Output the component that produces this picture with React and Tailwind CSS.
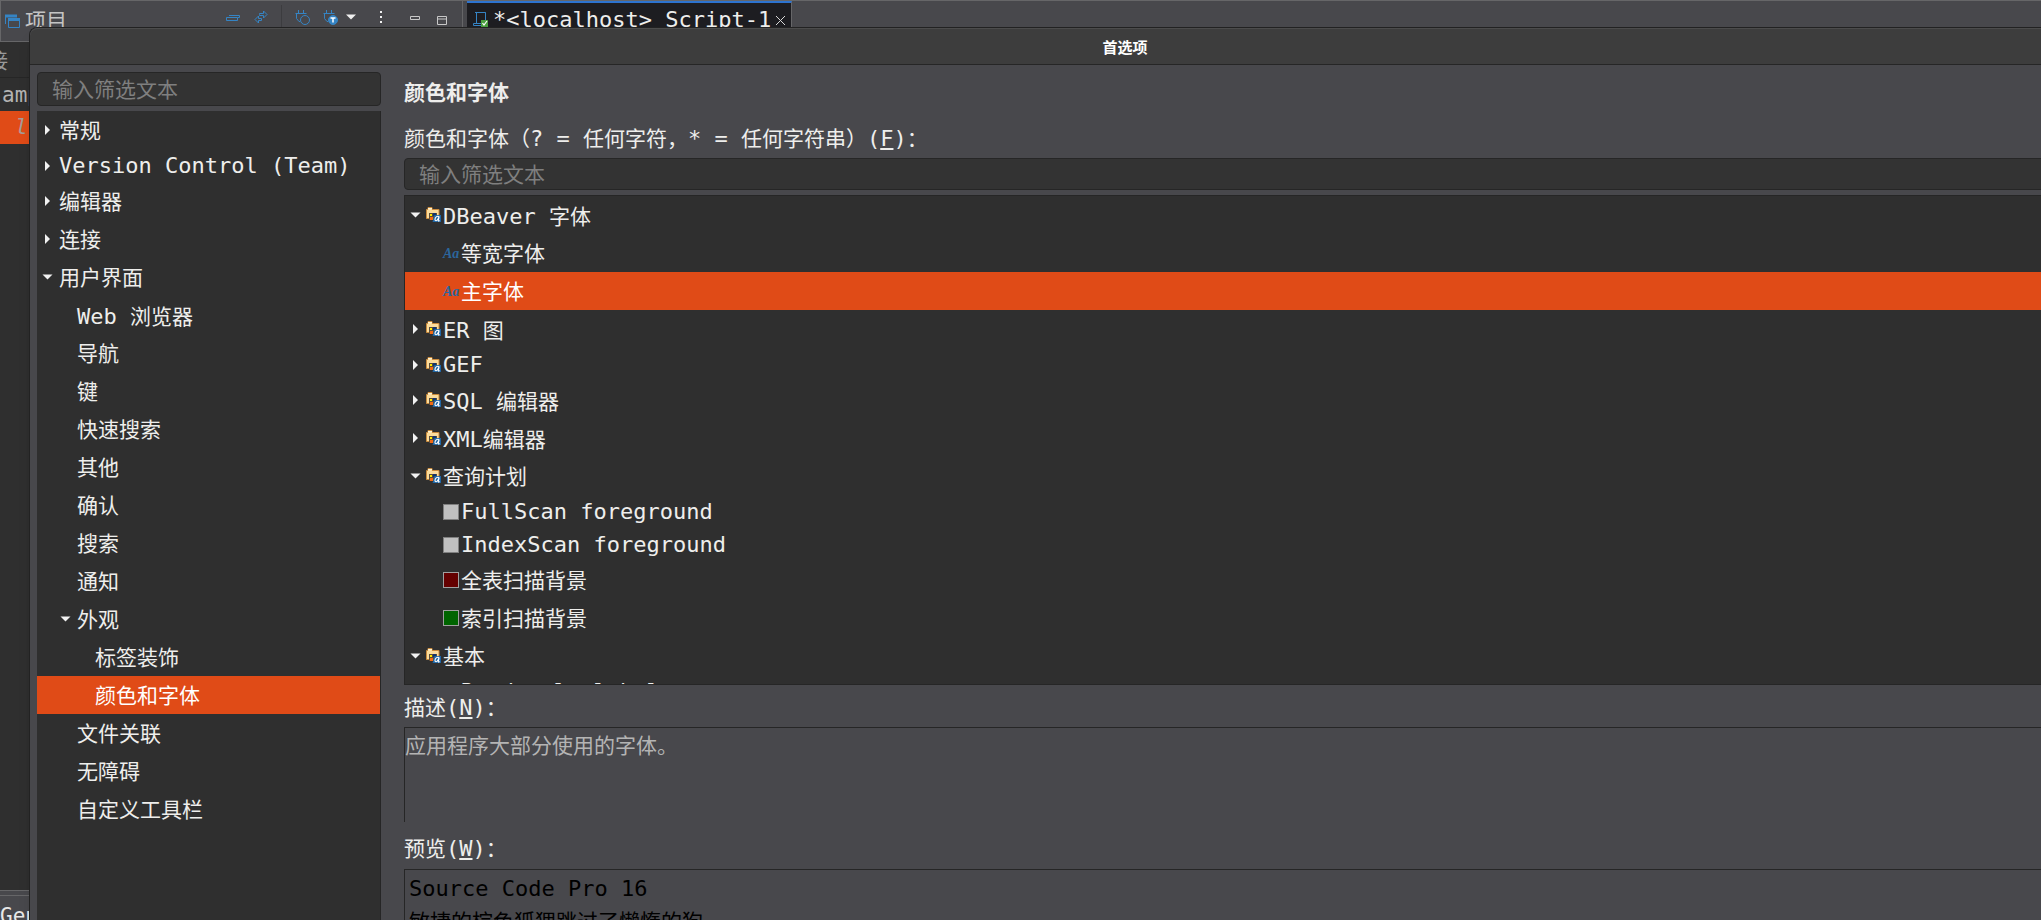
import { useState } from 'react';

// Preferences tree (left side of the dialog)
const PAGES = [
    { label: '常规', level: 0, arrow: 'closed' },
    { label: 'Version Control (Team)', level: 0, arrow: 'closed', short: true },
    { label: '编辑器', level: 0, arrow: 'closed' },
    { label: '连接', level: 0, arrow: 'closed' },
    { label: '用户界面', level: 0, arrow: 'open' },
    { label: 'Web 浏览器', level: 1 },
    { label: '导航', level: 1 },
    { label: '键', level: 1 },
    { label: '快速搜索', level: 1 },
    { label: '其他', level: 1 },
    { label: '确认', level: 1 },
    { label: '搜索', level: 1 },
    { label: '通知', level: 1 },
    { label: '外观', level: 1, arrow: 'open' },
    { label: '标签装饰', level: 2 },
    { label: '颜色和字体', level: 2 },
    { label: '文件关联', level: 1 },
    { label: '无障碍', level: 1 },
    { label: '自定义工具栏', level: 1 },
];

// Colors and fonts tree (right side)
const THEME = [
    { label: 'DBeaver 字体', arrow: 'open' },
    { label: '等宽字体', icon: 'font' },
    { label: '主字体', icon: 'font' },
    { label: 'ER 图', arrow: 'closed' },
    { label: 'GEF', arrow: 'closed', short: true },
    { label: 'SQL 编辑器', arrow: 'closed' },
    { label: 'XML编辑器', arrow: 'closed' },
    { label: '查询计划', arrow: 'open' },
    { label: 'FullScan foreground', icon: 'gray', short: true },
    { label: 'IndexScan foreground', icon: 'gray', short: true },
    { label: '全表扫描背景', icon: 'red' },
    { label: '索引扫描背景', icon: 'green' },
    { label: '基本', arrow: 'open' },
    { label: 'Read-only label', icon: 'gray', short: true },
];

const SWATCHES = {
    gray: 'bg-[#c0c0c0] border-[#808080]',
    red: 'bg-[#640000] border-[#a0a0a0]',
    green: 'bg-[#006400] border-[#a0a0a0]',
};

const INDENTS = ['pl-1', 'pl-[22px]', 'pl-10'];

// Latin runs are set one pixel larger than the Chinese around them
function Text({ children }) {
    return children
        .split(/([\x20-\x7e]+)/)
        .filter(Boolean)
        .map((run, i) => (/^[\x20-\x7e]/.test(run) ? <span key={i} className="whitespace-pre text-[22px]">{run}</span> : run));
}

function Arrow({ state }) {
    return (
        <svg className="w-[13px] h-3 shrink-0" viewBox="0 0 13 12" fill="#f2f2f2" aria-hidden="true">
            {state === 'open' && <path d="M1.500 3.500h10L6.500 8.500z" />}
            {state === 'closed' && <path d="M4 1v10l5-5z" />}
        </svg>
    );
}

function CategoryIcon() {
    return (
        <svg className="w-4 h-4" viewBox="0 0 16 16" aria-hidden="true">
            <path d="M.5 11.500V2.500H2V.5h4v2h7v9z" fill="#fbdc9c" stroke="#c98a3c" />
            <path d="M2 1h4v1.500H2z" fill="#fff2d0" />
            <path d="M3 6h8v7H3z" fill="#5a4c3a" />
            <rect x="4" y="7" width="2" height="2" fill="#ffee00" />
            <rect x="7" y="6" width="3" height="3" fill="#12356e" />
            <rect x="4" y="10" width="3" height="3" fill="#f26a14" />
            <path d="M8.500 8H15v7H6.500z" fill="#1f66a5" />
            <path d="M13 9.500c-2-1-4 1-4 3 0 1.800 2 1.500 3-.5l1.200-2.500-.9 4c0 1 .8.8 1.500 0" fill="none" stroke="#fff" strokeWidth="1.100" />
        </svg>
    );
}

function FontIcon() {
    return (
        <svg className="w-4 h-4 overflow-visible" viewBox="0 0 16 16" aria-hidden="true">
            <text x="0" y="13" fontFamily="Liberation Serif" fontStyle="italic" fontWeight="bold" fontSize="14" fill="#2b669c">Aa</text>
        </svg>
    );
}

function ThemeIcon({ icon }) {
    if (!icon) return <CategoryIcon />;
    if (icon === 'font') return <FontIcon />;
    return <span className={`block w-4 h-4 border ${SWATCHES[icon]}`} />;
}

function Row({ item, selected, onSelect, className, children }) {
    return (
        <li role="treeitem" aria-selected={selected}>
            <button
                type="button"
                onClick={onSelect}
                className={`flex w-full items-center whitespace-nowrap text-left ${item.short ? 'h-[33px]' : 'h-[38px]'} ${selected ? 'bg-[#e04b17] text-white' : ''} ${className}`}
            >
                {children}
                <span className={item.short ? '' : 'pt-1'}>
                    <Text>{item.label}</Text>
                </span>
            </button>
        </li>
    );
}

// Main window toolbar, seen above the dialog
function Workbench() {
    return (
        <div className="flex h-full flex-col bg-[#2f2f2f]">
            <header className="flex h-[42px] shrink-0 border-t border-[#666668] bg-[#48484c]">
                <div className="flex h-full w-[463px] shrink-0 items-start border-x border-b border-[#666668] pl-1">
                    <svg className="mt-3 h-4 w-4 shrink-0" viewBox="0 0 16 16" fill="none" stroke="#3584c4" aria-hidden="true">
                        <path d="M.5 11V2.500h11" />
                        <path d="M0 3h12M3 6.500h12" strokeWidth="3" />
                        <path d="M3.500 5.500h11v9h-11z" />
                    </svg>
                    <span className="ml-1 leading-10 text-[#c4c4c4]">项目</span>
                    <div className="ml-auto flex h-8 items-center pr-3 text-[#3584c4]">
                        <svg className="h-4 w-4" viewBox="0 0 16 16" fill="none" stroke="currentColor" aria-hidden="true">
                            <path d="M4 6.500h10.500v2H13M1.500 8.500h11v3h-11z" />
                        </svg>
                        <svg className="ml-3 h-4 w-4" viewBox="0 0 16 16" fill="none" stroke="currentColor" aria-hidden="true">
                            <path d="M6.500 5.500V4.500h4V2l3.500 3.500L10.500 9V6.500h-4zM8.500 11.500h-3V14L2 10.500 5.500 7v2.500h3z" />
                        </svg>
                        <span className="ml-3 h-6 w-px bg-[#3c3c3f]" />
                        <svg className="ml-3 h-4 w-4" viewBox="0 0 16 16" fill="none" stroke="currentColor" aria-hidden="true">
                            <path d="M4.500 1v3M9.500 1v3M1.500 4.500h11M2.500 4.500v5l2.500 3h1" />
                            <circle cx="11" cy="11" r="4.500" />
                        </svg>
                        <svg className="ml-3 h-4 w-4" viewBox="0 0 16 16" fill="none" stroke="currentColor" aria-hidden="true">
                            <path d="M4.500 1v3M9.500 1v3M1.500 4.500h11M2.500 4.500v5l2.500 3h1" />
                            <circle cx="11" cy="11" r="4.500" fill="currentColor" />
                            <path d="M8.500 9h5M11 8.500v5" stroke="#fff" strokeWidth="1.500" />
                        </svg>
                        <svg className="ml-2 h-4 w-4" viewBox="0 0 16 16" fill="#f0f0f0" aria-hidden="true">
                            <path d="M0 5.500h10l-5 5z" />
                        </svg>
                        <svg className="ml-3 h-4 w-4" viewBox="0 0 16 16" fill="#f0f0f0" aria-hidden="true">
                            <path d="M6 2h2v2H6zM6 7h2v2H6zM6 12h2v2H6z" />
                        </svg>
                        <svg className="ml-4 h-4 w-4" viewBox="0 0 16 16" fill="none" stroke="#c8c8c8" aria-hidden="true">
                            <path d="M4.500 7.500h9v3h-9z" />
                        </svg>
                        <svg className="ml-3 h-4 w-4" viewBox="0 0 16 16" fill="none" stroke="#c8c8c8" aria-hidden="true">
                            <path d="M3.500 7.500h9v8h-9zM3.500 10h9" />
                        </svg>
                    </div>
                </div>
                <div className="ml-1 flex h-full items-start border-r border-t-2 border-r-[#666668] border-t-[#2d73cf] bg-[#1d1d21] pl-[6px] text-[#eeeeec]">
                    <svg className="mt-2 h-4 w-4" viewBox="0 0 16 16" fill="none" aria-hidden="true">
                        <path d="M3.500 12.500V1.500h9v8M2 1.500h10.500M.5 14.500h8v-2h-8z" stroke="#3584c4" />
                        <rect x="8" y="9" width="7" height="7" fill="#4a9e3f" />
                        <path d="M9.500 12l1.500 2 3-4" stroke="#fff" strokeWidth="1.200" />
                    </svg>
                    <span className="ml-1 leading-[34px]">
                        <Text>{'*<localhost> Script-1'}</Text>
                    </span>
                    <svg className="mx-1 mt-3 h-3 w-3" viewBox="0 0 12 12" stroke="#d8d8d8" aria-hidden="true">
                        <path d="M1 1l9 9M10 1l-9 9" />
                    </svg>
                </div>
            </header>
            <div className="flex w-[30px] grow flex-col overflow-hidden whitespace-nowrap text-[#999]">
                <div className="flex h-9 items-center justify-end border-b border-[#262626] pr-[22px] pt-1">连接</div>
                <div className="flex h-[33px] items-center pl-[2px] pt-[2px] text-[#b4b4b4]">ample</div>
                <div className="flex h-[33px] items-center bg-[#e04b17] pl-[15px] italic text-[#a79c97]">l</div>
            </div>
            <footer className="h-[30px] w-[30px] shrink-0 overflow-hidden border-t border-[#666668] bg-[#48484c] pt-1">
                <div className="border-t border-[#666668] pt-[2px] leading-9 text-[#e8e8e8]">General</div>
            </footer>
        </div>
    );
}

function FilterInput({ id, className }) {
    return (
        <input
            id={id}
            type="text"
            aria-label="输入筛选文本"
            placeholder="输入筛选文本"
            className={`block w-full rounded border border-[#262626] bg-[#333333] px-[14px] pt-[2px] outline-none placeholder:text-[#7f7f7f] ${className}`}
        />
    );
}

function App() {
    const [page, setPage] = useState('颜色和字体');
    const [entry, setEntry] = useState('主字体');

    return (
        <div className="relative h-screen overflow-hidden font-['DejaVu_Sans_Mono','Noto_Sans_CJK_SC',monospace] text-[21px] text-[#eeeeec]">
            <Workbench />

            {/* The dialog runs past the right edge of the screen */}
            <section
                role="dialog"
                aria-labelledby="dialog-title"
                className="absolute left-[29px] top-[27px] flex h-full w-[calc(100%+150px)] flex-col rounded-tl-lg border-l border-t border-[#222222] bg-[#48484c] shadow-lg"
            >
                <h1
                    id="dialog-title"
                    className="h-[37px] shrink-0 rounded-tl-lg border-b border-t border-b-[#262626] border-t-[#4c4c4c] bg-[#3d3d3d] text-center font-['Noto_Sans_CJK_SC',sans-serif] text-[15px] leading-9 font-bold text-white"
                >
                    首选项
                </h1>

                <div className="flex min-h-0 grow">
                    <aside className="flex w-[351px] shrink-0 flex-col pl-[7px] pt-[7px]">
                        <FilterInput id="page-filter" className="h-[34px] shrink-0" />
                        <ul role="tree" className="mt-[5px] grow border-r border-[#262626] bg-[#2f2f2f]">
                            {PAGES.map((item) => (
                                <Row
                                    key={item.label}
                                    item={item}
                                    selected={page === item.label}
                                    onSelect={() => setPage(item.label)}
                                    className={INDENTS[item.level]}
                                >
                                    <span className="mr-[5px]">
                                        <Arrow state={item.arrow} />
                                    </span>
                                </Row>
                            ))}
                        </ul>
                    </aside>

                    <main className="flex min-w-0 grow flex-col pl-[23px]">
                        <h2 className="mt-2 h-10 leading-10 font-bold">颜色和字体</h2>
                        <label htmlFor="theme-filter" className="mt-2 block h-[37px] leading-9 whitespace-pre">
                            <Text>颜色和字体（? = 任何字符，* = 任何字符串）(</Text>
                            <u className="text-[22px]">F</u>
                            <Text>)：</Text>
                        </label>
                        <FilterInput id="theme-filter" className="h-8 shrink-0" />

                        <ul role="tree" className="mt-[5px] h-[490px] shrink-0 overflow-hidden border border-[#262626] bg-[#2f2f2f]">
                            {THEME.map((item) => (
                                <Row
                                    key={item.label}
                                    item={item}
                                    selected={entry === item.label}
                                    onSelect={() => setEntry(item.label)}
                                    className={item.icon ? 'pl-[38px]' : 'pl-1'}
                                >
                                    {!item.icon && <Arrow state={item.arrow} />}
                                    <span className={item.icon ? 'mr-[2px]' : 'ml-1 mr-[1px]'}>
                                        <ThemeIcon icon={item.icon} />
                                    </span>
                                </Row>
                            ))}
                        </ul>

                        <label htmlFor="description" className="mt-1 block h-[38px] leading-[38px]">
                            <Text>描述(</Text>
                            <u className="text-[22px]">N</u>
                            <Text>)：</Text>
                        </label>
                        <textarea
                            id="description"
                            readOnly
                            value="应用程序大部分使用的字体。"
                            className="block h-[95px] shrink-0 resize-none border-l border-t border-[#262626] leading-9 text-[#b4b4b4] outline-none"
                        />

                        <h3 className="mt-2 mb-[1px] h-[38px] leading-[38px]">
                            <Text>预览(</Text>
                            <u className="text-[22px]">W</u>
                            <Text>)：</Text>
                        </h3>
                        <div className="grow border-l border-t border-[#262626] px-1 pt-[2px] text-black">
                            <p className="leading-[33px]">
                                <Text>Source Code Pro 16</Text>
                            </p>
                            <p className="leading-[33px]">敏捷的棕色狐狸跳过了懒惰的狗</p>
                        </div>
                    </main>
                </div>
            </section>
        </div>
    );
}

export default App;
